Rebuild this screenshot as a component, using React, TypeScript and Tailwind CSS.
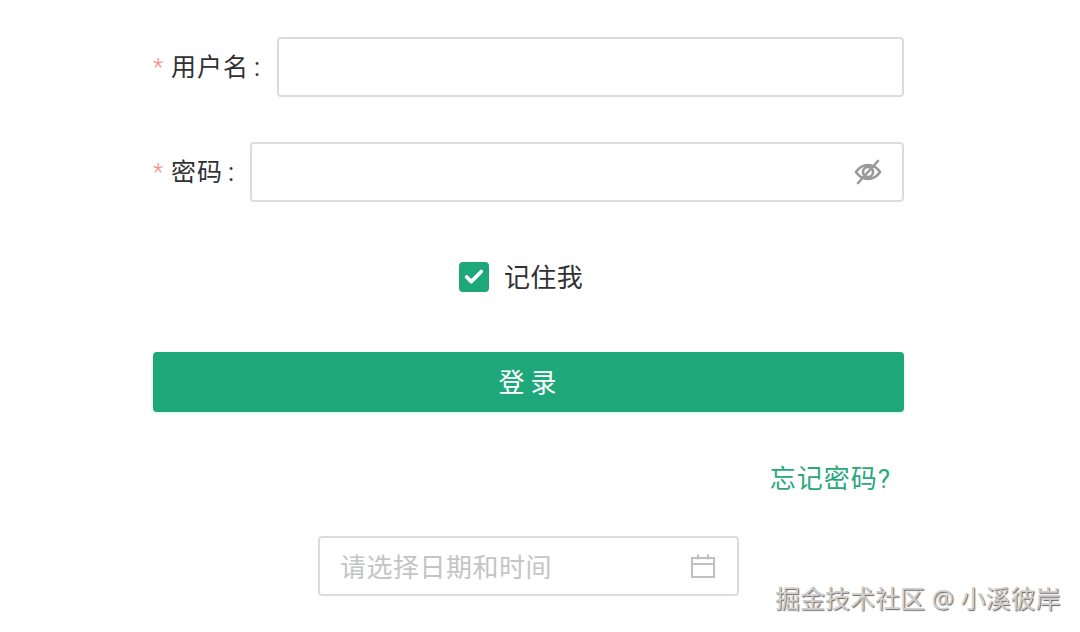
import { Check } from 'lucide-react'

function Label({ text, width }: { text: string; width: string }) {
  return (
    <label className={`flex items-center shrink-0 text-[25px] text-[#303133] pt-[2px] ${width}`}>
      <span className="text-[#f58a8a] w-[18px] text-[24px] font-light leading-none mb-[2px]" style={{ fontFamily: 'Roboto, sans-serif' }}>*</span>
      <span className="tracking-[1px]">{text}</span>
      <span className="ml-[5px]">:</span>
    </label>
  )
}

export default function App() {
  return (
    <div
      className="relative h-[632px] w-[1080px] bg-white overflow-hidden"
      style={{ fontFamily: 'Roboto, "Noto Sans CJK SC", sans-serif' }}
    >
      <div className="ml-[153px] w-[751px] pt-[37px] flex flex-col">
        {/* Username */}
        <div className="flex items-center">
          <Label text="用户名" width="w-[124px]" />
          <div className="flex-1 h-[60px] border-2 border-[#dcdcdc] rounded-[4px] bg-white" />
        </div>

        {/* Password */}
        <div className="flex items-center mt-[45px]">
          <Label text="密码" width="w-[97px]" />
          <div className="flex-1 h-[60px] border-2 border-[#dcdcdc] rounded-[4px] bg-white flex items-center justify-end pr-[20px]">
            <svg width="28" height="26" viewBox="0 0 28 26" fill="none" stroke="#999999" strokeWidth="2.6">
              <path d="M2 13c3-4.500 7-7 12-7s9 2.500 12 7c-3 4.500-7 7-12 7s-9-2.500-12-7z" />
              <circle cx="14" cy="13" r="5" />
              <path d="M24 2L4 24" strokeLinecap="round" />
            </svg>
          </div>
        </div>

        {/* Remember me */}
        <div className="flex items-center justify-center mt-[59px] h-[31px] pr-[15px]">
          <span className="w-[30px] h-[30px] rounded-[4px] bg-[#1ea779] flex items-center justify-center">
            <Check size={22} color="#ffffff" strokeWidth={4} />
          </span>
          <span className="ml-[15px] pt-[3px] text-[26px] tracking-[0.4px] text-[#303133]">记住我</span>
        </div>

        <button className="mt-[60px] h-[60px] pl-[4px] pt-[2px] rounded-[4px] bg-[#1ea779] text-white text-[26px] tracking-[6px] shadow-[0_1px_3px_rgba(30,167,121,0.2)]">
          登录
        </button>

        <a className="self-end mt-[49px] mr-[13px] text-[26px] tracking-[1px] leading-[36px] text-[#2aa87d]">忘记密码?</a>

        {/* Date picker */}
        <div className="self-start ml-[165px] mt-[39px] w-[421px] h-[60px] border-2 border-[#dcdcdc] rounded-[4px] flex items-center justify-between pl-[20px] pr-[21px]">
          <span className="pt-[4px] text-[26px] tracking-[0.5px] text-[#c4c4c4]">请选择日期和时间</span>
          <svg width="26" height="26" viewBox="0 0 26 26" fill="none" stroke="#c0c0c0" strokeWidth="2">
            <path d="M2 5h22v19H2z" />
            <path d="M2 11h22M8 1.500v5M18 1.500v5" />
          </svg>
        </div>
      </div>

      {/* Watermark */}
      <div
        className="absolute left-[775px] top-[580px] text-[25px] leading-[36px] text-[#cfcfcf] whitespace-nowrap [text-shadow:1px_1px_1px_#666,-1px_-1px_0_#fff]"
        style={{ fontFamily: '"Noto Sans", "Noto Sans CJK SC", sans-serif' }}
      >
        掘金技术社区 @ 小溪彼岸
      </div>
    </div>
  )
}
